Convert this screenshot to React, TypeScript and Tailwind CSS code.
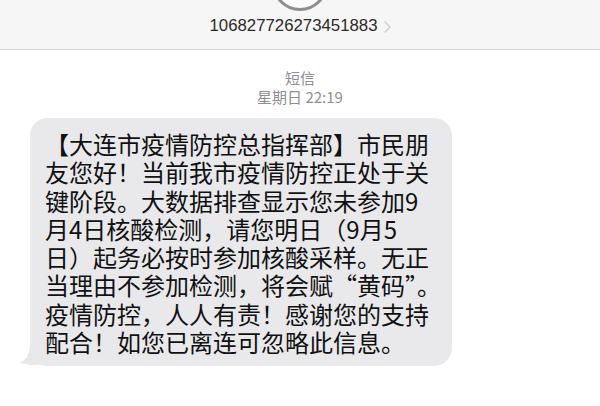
const lines = [
  "【大连市疫情防控总指挥部】市民朋",
  "友您好！当前我市疫情防控正处于关",
  "键阶段。大数据排查显示您未参加9",
  "月4日核酸检测，请您明日（9月5",
  "日）起务必按时参加核酸采样。无正",
  "当理由不参加检测，将会赋“黄码”。",
  "疫情防控，人人有责！感谢您的支持",
  "配合！如您已离连可忽略此信息。",
];

function Header() {
  return (
    <header className="h-[50px] bg-[#f6f6f6] border-b border-[#d9d9d9] flex flex-col items-center overflow-hidden">
      {/* avatar, mostly scrolled off the top */}
      <div className="w-[56px] h-[56px] shrink-0 rounded-full border-[3px] border-[#8d8d92] bg-[#fbfbfb] mt-[-45px]" />
      <div className="mt-[5px] flex items-center gap-[6px]">
        <span className="text-[16.8px] leading-[20px] text-[#2a2a2a] font-['Liberation_Sans',Arial,sans-serif]">
          106827726273451883
        </span>
        <svg width="7" height="12" viewBox="0 0 7 12" className="mt-[1px]">
          <path d="M1 1l5 5-5 5" fill="none" stroke="#cfcfd4" strokeWidth="1.5" strokeLinecap="round" strokeLinejoin="round" />
        </svg>
      </div>
    </header>
  );
}

function Bubble() {
  return (
    <div className="relative ml-[30px] w-[422px] mt-[12px]">
      <div className="rounded-[18px] bg-[#e9e9eb] pl-[15px] pr-[10px] pt-[12px] pb-[10px] text-[24px] leading-[28.3px] text-[#111] font-['Noto_Sans_CJK_SC',sans-serif]">
        {lines.map((l) => (
          <div key={l} className="whitespace-nowrap">{l}</div>
        ))}
      </div>
      {/* tail */}
      <svg width="24" height="22" viewBox="0 0 24 22" className="absolute left-[-11px] bottom-0">
        <path d="M24 0 L24 20 C17 22 9 21 0 19 C8 16 11 9 11 0 Z" fill="#e9e9eb" />
      </svg>
    </div>
  );
}

export default function App() {
  return (
    <div className="w-[600px] h-[406px] bg-white overflow-hidden">
      <Header />
      <div className="flex flex-col items-center pt-[18px] text-[#8e8e93] font-['Noto_Sans_CJK_SC',sans-serif]">
        <div className="text-[15px] leading-[19px]">短信</div>
        <div className="text-[15px] leading-[19px]">星期日 22:19</div>
      </div>
      <Bubble />
    </div>
  );
}
